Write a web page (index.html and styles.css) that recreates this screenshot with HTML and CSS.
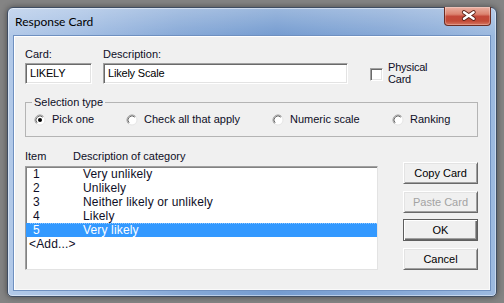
FILE: index.html
```html
<!DOCTYPE html>
<html>
<head>
<meta charset="utf-8">
<title>Response Card</title>
<link rel="stylesheet" href="styles.css">
</head>
<body>
<div class="window">
  <div class="titlebar">
    <span class="title">Response Card</span>
    <div class="close">
      <svg width="47" height="19" viewBox="0 0 47 19">
        <path d="M20 6.2 L29.6 12.8 M29.6 6.2 L20 12.8" stroke="#5a2218" stroke-width="4.2" stroke-linecap="round" fill="none"/>
        <path d="M20 6.2 L29.6 12.8 M29.6 6.2 L20 12.8" stroke="#fff" stroke-width="2.4" stroke-linecap="round" fill="none"/>
      </svg>
    </div>
  </div>
  <div class="client">
    <div class="top-row">
      <div class="field card-field">
        <label class="lbl">Card:</label>
        <div class="input">LIKELY</div>
      </div>
      <div class="field desc-field">
        <label class="lbl">Description:</label>
        <div class="input">Likely Scale</div>
      </div>
      <div class="check">
        <span class="box"></span>
        <span class="check-text">Physical<br>Card</span>
      </div>
    </div>

    <fieldset class="group">
      <legend>Selection type</legend>
      <div class="radios">
        <div class="radio">
          <svg width="12" height="12" viewBox="0 0 12 12">
            <circle cx="6" cy="6" r="5" fill="#fff" stroke="#e6e6e6"/>
            <path d="M2.46 9.54 A5 5 0 0 1 9.54 2.46" stroke="#a0a0a0" fill="none"/>
            <path d="M3.17 8.83 A4 4 0 0 1 8.83 3.17" stroke="#6a6a6a" fill="none"/>
            <circle cx="6" cy="6" r="2" fill="#000"/>
          </svg>
          <span>Pick one</span>
        </div>
        <div class="radio">
          <svg width="12" height="12" viewBox="0 0 12 12">
            <circle cx="6" cy="6" r="5" fill="#fff" stroke="#e6e6e6"/>
            <path d="M2.46 9.54 A5 5 0 0 1 9.54 2.46" stroke="#a0a0a0" fill="none"/>
            <path d="M3.17 8.83 A4 4 0 0 1 8.83 3.17" stroke="#6a6a6a" fill="none"/>
          </svg>
          <span>Check all that apply</span>
        </div>
        <div class="radio">
          <svg width="12" height="12" viewBox="0 0 12 12">
            <circle cx="6" cy="6" r="5" fill="#fff" stroke="#e6e6e6"/>
            <path d="M2.46 9.54 A5 5 0 0 1 9.54 2.46" stroke="#a0a0a0" fill="none"/>
            <path d="M3.17 8.83 A4 4 0 0 1 8.83 3.17" stroke="#6a6a6a" fill="none"/>
          </svg>
          <span>Numeric scale</span>
        </div>
        <div class="radio">
          <svg width="12" height="12" viewBox="0 0 12 12">
            <circle cx="6" cy="6" r="5" fill="#fff" stroke="#e6e6e6"/>
            <path d="M2.46 9.54 A5 5 0 0 1 9.54 2.46" stroke="#a0a0a0" fill="none"/>
            <path d="M3.17 8.83 A4 4 0 0 1 8.83 3.17" stroke="#6a6a6a" fill="none"/>
          </svg>
          <span>Ranking</span>
        </div>
      </div>
    </fieldset>

    <div class="bottom">
      <div class="list-col">
        <div class="list-head">
          <span class="head-item">Item</span>
          <span>Description of category</span>
        </div>
        <div class="listbox">
          <div class="row"><span class="num">1</span><span>Very unlikely</span></div>
          <div class="row"><span class="num">2</span><span>Unlikely</span></div>
          <div class="row"><span class="num">3</span><span>Neither likely or unlikely</span></div>
          <div class="row"><span class="num">4</span><span>Likely</span></div>
          <div class="row selected"><span class="num">5</span><span>Very likely</span></div>
          <div class="row">&lt;Add...&gt;</div>
        </div>
      </div>
      <div class="buttons">
        <div class="btn">Copy Card</div>
        <div class="btn disabled">Paste Card</div>
        <div class="btn default">OK</div>
        <div class="btn">Cancel</div>
      </div>
    </div>
  </div>
</div>
</body>
</html>
```

FILE: styles.css
```css
* { box-sizing: border-box; }
html, body { margin: 0; }
body {
  width: 504px;
  height: 303px;
  overflow: hidden;
  padding: 7px;
  background: #848484;
  font-family: "Liberation Sans", Arial, sans-serif;
  font-size: 11px;
  color: #0e0e26;
}

.window {
  width: 490px;
  height: 290px;
  display: flex;
  flex-direction: column;
  padding: 0 5px 5px 5px;
  border: 1px solid #3f4d62;
  border-radius: 6px 6px 5px 5px;
  background:
    linear-gradient(180deg, rgba(255,255,255,0.28), rgba(255,255,255,0) 28px),
    linear-gradient(90deg, #b2c9e8 0%, #a3bee3 15%, #87a9d7 35%, #759cd0 55%, #86a8d6 78%, #9cb9df 100%);
  box-shadow: 0 0 6px rgba(0,0,0,0.45), inset 0 0 0 1px rgba(255,255,255,0.45);
}

.titlebar {
  height: 27px;
  display: flex;
  align-items: flex-start;
  padding-left: 2px;
}
.title {
  font-family: "Lato", "Liberation Sans", sans-serif;
  font-size: 12px;
  line-height: 27px;
  color: #000;
}
.close {
  margin-left: auto;
  margin-top: -1px;
  width: 47px;
  height: 19px;
  border: 1px solid #6b2c22;
  border-top: none;
  border-radius: 0 0 4px 4px;
  background: linear-gradient(180deg, #eab0a2 0%, #dc8470 40%, #c4493a 52%, #c24a36 78%, #d77863 100%);
  box-shadow: inset 0 0 0 1px rgba(255,255,255,0.25);
}
.close svg { display: block; margin: -1px 0 0 -1px; }

.client {
  flex: 1;
  border: 1px solid #6f90c0;
  background: #f0f0f0;
  box-shadow: inset 1px 1px 0 #ffffff, inset -1px -1px 0 #fafafa;
  padding: 12px 0 0 11px;
}

.top-row {
  display: flex;
  align-items: flex-start;
  height: 36px;
}
.lbl {
  display: block;
  line-height: 13px;
  margin-bottom: 2px;
}
.card-field { width: 67px; }
.desc-field { width: 245px; margin-left: 11px; }
.input {
  height: 21px;
  background: #fff;
  border: 1px solid;
  border-color: #a0a0a0 #ffffff #ffffff #a0a0a0;
  box-shadow: inset 1px 1px 0 #6a6a6a, inset -1px -1px 0 #e3e3e3;
  padding-left: 4px;
  line-height: 19px;
  color: #000;
  letter-spacing: -0.2px;
}
.check {
  display: flex;
  align-items: flex-start;
  margin-left: 22px;
  margin-top: 13px;
}
.box {
  width: 13px;
  height: 13px;
  margin-top: 7px;
  background: #fff;
  border: 1px solid;
  border-color: #a0a0a0 #ffffff #ffffff #a0a0a0;
  box-shadow: inset 1px 1px 0 #6a6a6a, inset -1px -1px 0 #e3e3e3;
}
.check-text {
  margin-left: 5px;
  line-height: 12px;
  letter-spacing: -0.2px;
}

.group {
  margin: 12px 0 0 0;
  width: 453px;
  padding: 4px 6px 10px 6px;
  border: 1px solid #b4b4b4;
  min-inline-size: 0;
}
.group legend {
  padding: 0 2px;
  line-height: 13px;
}
.radios {
  display: grid;
  grid-template-columns: 92px 146px 120px auto;
  margin-left: 2px;
}
.radio {
  display: flex;
  align-items: center;
  height: 13px;
  line-height: 13px;
}
.radio svg { display: block; flex: none; }
.radio span { margin-left: 6px; white-space: nowrap; }

.bottom {
  display: flex;
  align-items: flex-start;
  margin-top: 13px;
}
.list-col { width: 353px; }
.list-head {
  display: flex;
  line-height: 13px;
}
.head-item { width: 48px; }
.listbox {
  margin-top: 3px;
  height: 104px;
  background: #fff;
  border: 1px solid;
  border-color: #a0a0a0 #e3e3e3 #e3e3e3 #a0a0a0;
  box-shadow: inset 1px 1px 0 #828282;
}
.row {
  height: 14px;
  line-height: 14px;
  padding-left: 3px;
  font-size: 12px;
  letter-spacing: 0.15px;
  color: #0e0e26;
  white-space: nowrap;
}
.num {
  display: inline-block;
  width: 54px;
  padding-left: 4px;
}
.row.selected {
  position: relative;
  background: #3399ff;
  color: #fff;
}
.row.selected::before {
  content: "";
  position: absolute;
  left: 4px;
  right: 0;
  top: 0;
  height: 1px;
  background: repeating-linear-gradient(90deg, rgba(255,255,255,0.45) 0 1px, transparent 1px 2px);
}

.buttons {
  width: 75px;
  margin-left: 25px;
  margin-top: 12px;
  display: flex;
  flex-direction: column;
}
.btn {
  height: 22px;
  line-height: 20px;
  text-align: center;
  color: #000;
  background: #f0f0f0;
  border: 1px solid;
  border-color: #ffffff #696969 #696969 #ffffff;
  box-shadow: inset 1px 1px 0 #e3e3e3, inset -1px -1px 0 #a0a0a0;
}
.btn + .btn { margin-top: 7px; }
.btn.default {
  margin-top: 6px;
  border: 1px solid #5e5e5e;
  box-shadow: inset 1px 1px 0 #ffffff, inset -1px -1px 0 #696969, inset -2px -2px 0 #a0a0a0;
}
.btn.disabled { color: #a3a3a3; }
```
